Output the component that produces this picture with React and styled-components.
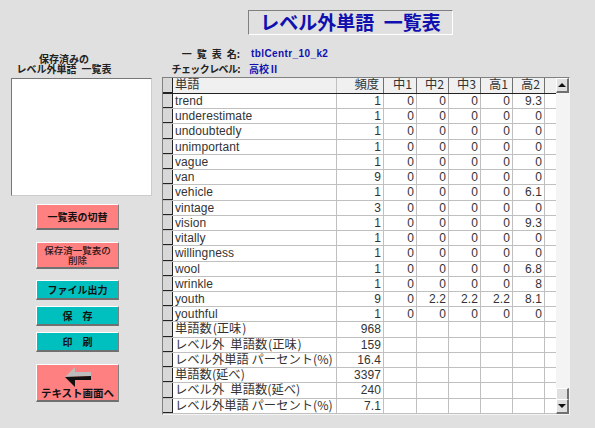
import React from 'react';
import styled, { createGlobalStyle } from 'styled-components';

const GlobalStyle = createGlobalStyle`
  html, body {
    margin: 0;
    padding: 0;
    background: #e0e0e0;
  }
`;

const Page = styled.div`
  width: 595px;
  height: 428px;
  overflow: hidden;
  background: #e0e0e0;
  font-family: "Noto Sans CJK JP", "Liberation Sans", sans-serif;
  display: flex;
  flex-direction: column;
  align-items: flex-start;
`;

const TitleBar = styled.div`
  margin: 10px 0 0 248px;
  width: 205px;
  height: 25px;
  box-sizing: border-box;
  border: 1px solid;
  border-color: #808080 #fff #fff #808080;
  color: #1010b0;
  font-size: 19px;
  font-weight: 700;
  line-height: 21px;
  text-align: center;
  white-space: nowrap;
`;

const Main = styled.div`
  display: flex;
  margin-top: 11px;
`;

const Side = styled.div`
  width: 162px;
  display: flex;
  flex-direction: column;
  padding-left: 11px;
  box-sizing: border-box;
`;

const SavedLabel = styled.div`
  width: 106px;
  margin-top: 8px;
  font-size: 10px;
  font-weight: 700;
  line-height: 9.5px;
  text-align: center;
  color: #222;
  white-space: nowrap;
`;

const SavedList = styled.div`
  width: 141px;
  height: 118px;
  margin-top: 5px;
  box-sizing: border-box;
  background: #fff;
  border: 1px solid;
  border-color: #777 #ccc #ccc #777;
`;

const Buttons = styled.div`
  display: flex;
  flex-direction: column;
  margin: 8px 0 0 25px;
`;

const Button = styled.div`
  width: 83px;
  height: ${p => p.$h}px;
  margin-top: ${p => p.$mt}px;
  box-sizing: border-box;
  background: ${p => (p.$teal ? '#00bfbf' : '#ff8080')};
  border-style: solid;
  border-width: 1px 1px 2px 1px;
  border-color: #fff #808080 #707070 #fff;
  color: ${p => (p.$light ? '#301818' : '#111')};
  font-size: ${p => p.$size || 10}px;
  font-weight: ${p => (p.$light ? 500 : 700)};
  line-height: ${p => p.$lh || 12}px;
  display: flex;
  flex-direction: column;
  align-items: center;
  justify-content: center;
  text-align: center;
  white-space: pre-wrap;
`;

const Content = styled.div`
  display: flex;
  flex-direction: column;
`;

const InfoRow = styled.div`
  display: flex;
  align-items: center;
  height: 15px;
  font-size: 10px;
  font-weight: 700;
  color: #222;
  white-space: nowrap;
`;

const InfoLabel = styled.span`
  width: 78px;
  text-align: right;
  letter-spacing: ${p => (p.$tight ? '-0.6px' : '0')};
`;

const InfoValue = styled.span`
  color: #1010b0;
  font-family: ${p => (p.$latin ? '"Liberation Sans", sans-serif' : 'inherit')};
  letter-spacing: ${p => (p.$latin ? '0.4px' : '0')};
  margin-left: ${p => (p.$latin ? 11 : 9)}px;
`;

const Sheet = styled.div`
  width: 408px;
  height: 338px;
  margin-top: 1px;
  box-sizing: border-box;
  display: flex;
  background: #fff;
  border: 1px solid;
  border-color: #808080 #f4f4f4 #f4f4f4 #808080;
`;

const Rows = styled.div`
  width: 393px;
  display: flex;
  flex-direction: column;
`;

const Row = styled.div`
  display: grid;
  grid-template-columns: 10px 164px 47px 33px 32px 32px 32px 32px 11px;
  height: ${p => (p.$head ? 16 : 15.3)}px;
  box-sizing: border-box;
  background: ${p => (p.$head ? '#f0f0f0' : '#fff')};
  border-bottom: 1px solid ${p => (p.$head ? '#222' : '#c0c0c0')};
`;

const Selector = styled.div`
  background: #d8d8d8;
  border-right: 1px solid #222;
  box-shadow: inset 0 -1px 0 #222;
`;

const Cell = styled.div`
  box-sizing: border-box;
  padding: ${p => (p.$cjk ? 0 : 1)}px ${p => (p.$head ? 4 : 2)}px 0 2px;
  border-right: 1px solid ${p => (p.$head ? '#707070' : '#c0c0c0')};
  font-family: ${p =>
    p.$cjk
      ? '"Noto Sans CJK JP", sans-serif'
      : '"Liberation Sans", "Noto Sans CJK JP", sans-serif'};
  font-size: ${p => (p.$cjk ? 12.3 : 12)}px;
  letter-spacing: ${p => (p.$cjk ? 0 : 0.1)}px;
  line-height: 13px;
  color: #333;
  font-weight: 400;
  text-align: ${p => (p.$num ? 'right' : 'left')};
  white-space: nowrap;
`;

const LastCell = styled.div`
  border-right: none;
`;

const Scrollbar = styled.div`
  width: 13px;
  display: flex;
  flex-direction: column;
  background: #f4f4f4;
`;

const ScrollButton = styled.div`
  height: 15px;
  box-sizing: border-box;
  background: #e0e0e0;
  border-style: solid;
  border-width: 1px 2px 2px 1px;
  border-color: #fff #707070 #707070 #fff;
  display: flex;
  align-items: center;
  justify-content: center;
`;

const Track = styled.div`
  flex: 1;
  display: flex;
  flex-direction: column;
  justify-content: flex-end;
`;

const Thumb = styled(ScrollButton)`
  height: 11px;
  border-bottom-width: 0;
`;

const Arrow = styled.span`
  width: 0;
  height: 0;
  border-left: 4px solid transparent;
  border-right: 4px solid transparent;
  ${p => (p.$down ? 'border-top: 4px solid #111;' : 'border-bottom: 4px solid #111;')}
`;

const words = [
  ['trend', 1, 0, 0, 0, 0, 9.3],
  ['underestimate', 1, 0, 0, 0, 0, 0],
  ['undoubtedly', 1, 0, 0, 0, 0, 0],
  ['unimportant', 1, 0, 0, 0, 0, 0],
  ['vague', 1, 0, 0, 0, 0, 0],
  ['van', 9, 0, 0, 0, 0, 0],
  ['vehicle', 1, 0, 0, 0, 0, 6.1],
  ['vintage', 3, 0, 0, 0, 0, 0],
  ['vision', 1, 0, 0, 0, 0, 9.3],
  ['vitally', 1, 0, 0, 0, 0, 0],
  ['willingness', 1, 0, 0, 0, 0, 0],
  ['wool', 1, 0, 0, 0, 0, 6.8],
  ['wrinkle', 1, 0, 0, 0, 0, 8],
  ['youth', 9, 0, 2.2, 2.2, 2.2, 8.1],
  ['youthful', 1, 0, 0, 0, 0, 0],
];

const summary = [
  ['単語数\u200A(正味\u200A)', 968],
  ['レベル外\u2002単語数\u200A(正味\u200A)', 159],
  ['レベル外単語 パーセント(%)', 16.4],
  ['単語数(延べ)', 3397],
  ['レベル外\u2002単語数(延べ)', 240],
  ['レベル外単語 パーセント(%)', 7.1],
];

const heads = ['頻度', '中1', '中2', '中3', '高1', '高2'];

const BackArrow = () => (
  <svg width="26" height="20" viewBox="0 0 26 20">
    <path d="M10 0 L10 5 L26 5 L26 9 L0 10 Z" fill="#bdbdbd" />
    <path d="M0 10 L26 9 L26 13 L10 13 L10 20 Z" fill="#111" />
  </svg>
);

const App = () => (
  <Page>
    <GlobalStyle />
    <TitleBar>レベル外単語{'\u2002'}一覧表</TitleBar>
    <Main>
      <Side>
        <SavedLabel>
          保存済みの
          <br />
          レベル外単語{'\u2002'}一覧表
        </SavedLabel>
        <SavedList />
        <Buttons>
          <Button $h={26} $mt={0}>一覧表の切替</Button>
          <Button $h={27} $mt={12} $light $size={9.5} $lh={10}>保存済一覧表の{'\n'}削除</Button>
          <Button $h={20} $mt={11} $teal>ファイル出力</Button>
          <Button $h={20} $mt={6} $teal>保　存</Button>
          <Button $h={20} $mt={6} $teal>印　刷</Button>
          <Button $h={38} $mt={12} $size={10.5}>
            <BackArrow />
            テキスト画面へ
          </Button>
        </Buttons>
      </Side>
      <Content>
        <InfoRow>
          <InfoLabel>一{'\u2002'}覧{'\u2002'}表{'\u2002'}名:</InfoLabel>
          <InfoValue $latin>tblCentr_10_k2</InfoValue>
        </InfoRow>
        <InfoRow>
          <InfoLabel $tight>チェックレベル:</InfoLabel>
          <InfoValue>高校Ⅱ</InfoValue>
        </InfoRow>
        <Sheet>
          <Rows>
            <Row $head>
              <Selector />
              <Cell $cjk>単語</Cell>
              {heads.map(h => (
                <Cell key={h} $cjk $num $head>{h}</Cell>
              ))}
              <LastCell />
            </Row>
            {words.map(([word, ...nums]) => (
              <Row key={word}>
                <Selector />
                <Cell>{word}</Cell>
                {nums.map((n, i) => (
                  <Cell key={i} $num>{n}</Cell>
                ))}
                <LastCell />
              </Row>
            ))}
            {summary.map(([label, total], idx) => (
              <Row key={idx}>
                <Selector />
                <Cell $cjk>{label}</Cell>
                <Cell $num>{total}</Cell>
                {[0, 1, 2, 3, 4].map(i => (
                  <Cell key={i} />
                ))}
                <LastCell />
              </Row>
            ))}
          </Rows>
          <Scrollbar>
            <ScrollButton><Arrow /></ScrollButton>
            <Track><Thumb /></Track>
            <ScrollButton><Arrow $down /></ScrollButton>
          </Scrollbar>
        </Sheet>
      </Content>
    </Main>
  </Page>
);

export default App;
